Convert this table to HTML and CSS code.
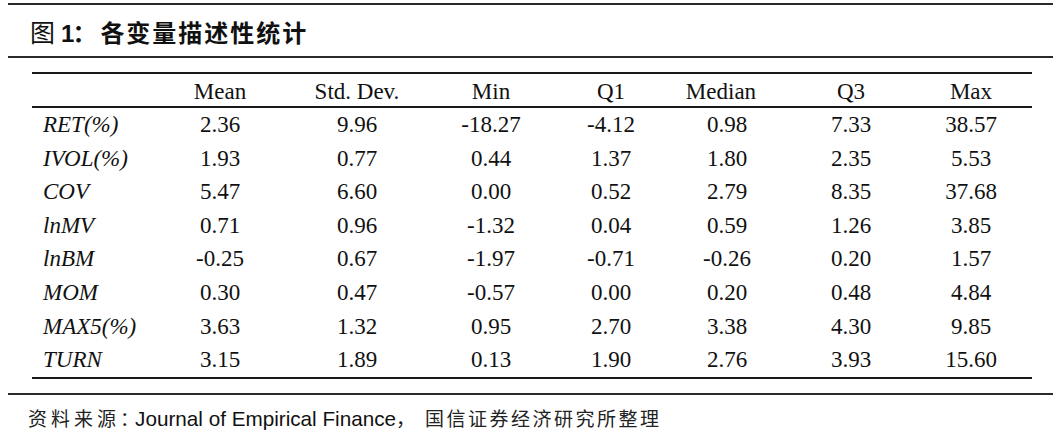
FILE: index.html
```html
<!DOCTYPE html>
<html lang="zh-CN">
<head>
<meta charset="utf-8">
<title>图1：各变量描述性统计</title>
<link rel="stylesheet" href="styles.css">
</head>
<body>
<div class="page">
  <div class="title-bar">
    <h1 class="title"><span class="fig">图</span><span class="num">1</span><span class="colon">：</span><span class="name">各变量描述性统计</span></h1>
  </div>
  <table class="stats">
    <colgroup>
      <col class="c-label"><col class="c-mean"><col class="c-sd"><col class="c-min"><col class="c-q1"><col class="c-med"><col class="c-q3"><col class="c-max">
    </colgroup>
    <thead>
      <tr><th></th><th>Mean</th><th>Std. Dev.</th><th>Min</th><th>Q1</th><th>Median</th><th>Q3</th><th class="last">Max</th></tr>
    </thead>
    <tbody>
      <tr><td class="lab">RET(%)</td><td>2.36</td><td>9.96</td><td>-18.27</td><td>-4.12</td><td class="med">0.98</td><td>7.33</td><td class="last">38.57</td></tr>
      <tr><td class="lab">IVOL(%)</td><td>1.93</td><td>0.77</td><td>0.44</td><td>1.37</td><td class="med">1.80</td><td>2.35</td><td class="last">5.53</td></tr>
      <tr><td class="lab">COV</td><td>5.47</td><td>6.60</td><td>0.00</td><td>0.52</td><td class="med">2.79</td><td>8.35</td><td class="last">37.68</td></tr>
      <tr><td class="lab">lnMV</td><td>0.71</td><td>0.96</td><td>-1.32</td><td>0.04</td><td class="med">0.59</td><td>1.26</td><td class="last">3.85</td></tr>
      <tr><td class="lab">lnBM</td><td>-0.25</td><td>0.67</td><td>-1.97</td><td>-0.71</td><td class="med">-0.26</td><td>0.20</td><td class="last">1.57</td></tr>
      <tr><td class="lab">MOM</td><td>0.30</td><td>0.47</td><td>-0.57</td><td>0.00</td><td class="med">0.20</td><td>0.48</td><td class="last">4.84</td></tr>
      <tr><td class="lab">MAX5(%)</td><td>3.63</td><td>1.32</td><td>0.95</td><td>2.70</td><td class="med">3.38</td><td>4.30</td><td class="last">9.85</td></tr>
      <tr><td class="lab">TURN</td><td>3.15</td><td>1.89</td><td>0.13</td><td>1.90</td><td class="med">2.76</td><td>3.93</td><td class="last">15.60</td></tr>
    </tbody>
  </table>
  <div class="source">
    <span class="cjk">资料来源</span><span class="cjk colon">：</span><span class="latin">Journal of Empirical Finance</span><span class="cjk comma">，</span><span class="cjk tail">国信证券经济研究所整理</span>
  </div>
</div>
</body>
</html>
```
FILE: styles.css
```css
html, body {
  margin: 0;
  padding: 0;
  background: #ffffff;
  color: #000000;
}

.page {
  padding: 3px 7px 0 8px;
}

.title-bar {
  border-top: 2px solid #2a2a2a;
  border-bottom: 2px solid #2a2a2a;
  height: 47px;
  padding: 4px 0 0 22px;
  display: flex;
  align-items: center;
}

.title {
  margin: 0;
  font-family: "Noto Sans CJK SC", sans-serif;
  font-size: 24px;
  font-weight: 700;
  line-height: 1;
  display: flex;
  align-items: baseline;
  color: #111;
}

.title .fig {
  font-weight: 400;
  font-size: 25px;
}

.title .num {
  font-family: "Liberation Sans", Arial, sans-serif;
  font-weight: 700;
  font-size: 24px;
  margin-left: 6px;
}

.title .colon {
  margin-left: -2px;
  width: 28px;
}

.title .name {
  letter-spacing: 2px;
}

.stats {
  margin: 14px 0 0 24px;
  width: 1000px;
  border-collapse: collapse;
  table-layout: fixed;
  font-family: "Liberation Serif", "Times New Roman", serif;
  font-size: 23px;
  color: #111;
  border-top: 2px solid #1a1a1a;
  border-bottom: 2px solid #1a1a1a;
}

.c-label { width: 128px; }
.c-mean { width: 120px; }
.c-sd { width: 154px; }
.c-min { width: 114px; }
.c-q1 { width: 126px; }
.c-med { width: 94px; }
.c-q3 { width: 166px; }
.c-max { width: 98px; }

.stats th {
  font-weight: 400;
  height: 29px;
  line-height: 29px;
  padding: 3px 0 0 0;
  text-align: center;
  border-bottom: 2px solid #1a1a1a;
}

.stats td {
  height: 33.6px;
  line-height: 33.6px;
  padding: 0;
  text-align: center;
  white-space: nowrap;
}

.stats td.lab {
  text-align: left;
  font-style: italic;
  padding-left: 11px;
}

.stats td.med {
  padding-left: 12px;
}

.stats .last {
  padding-right: 24px;
}

.source {
  margin-top: 14px;
  border-top: 2px solid #2a2a2a;
  padding: 9px 0 0 20px;
  height: 30px;
  display: flex;
  align-items: baseline;
  color: #111;
}

.source .cjk {
  font-family: "Noto Sans CJK SC", sans-serif;
  font-size: 19px;
  letter-spacing: 4px;
  color: #222;
}

.source .colon {
  letter-spacing: -4px;
}

.source .comma {
  letter-spacing: 10px;
}

.source .tail {
  letter-spacing: 2.5px;
}

.source .latin {
  font-family: "Liberation Sans", Arial, sans-serif;
  font-size: 20.7px;
}
```
